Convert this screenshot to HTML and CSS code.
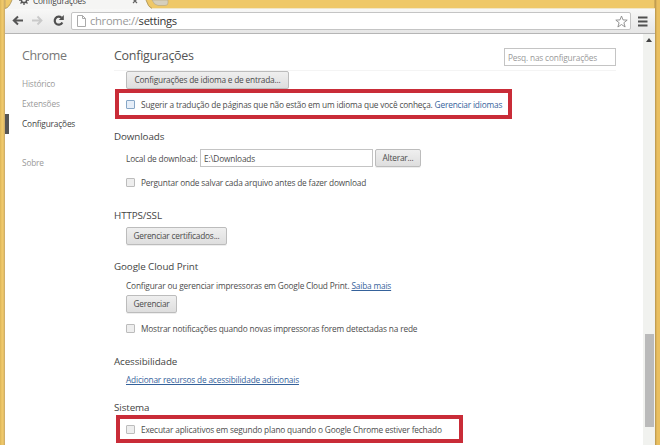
FILE: index.html
```
<!DOCTYPE html>
<html lang="pt-BR">
<head>
<meta charset="utf-8">
<title>Configurações</title>
<link rel="stylesheet" href="styles.css">
</head>
<body>
<div class="window">
  <div class="tabstrip">
    <svg class="tab-shape" width="175" height="9" viewBox="0 0 175 9"><path d="M0 9Q4 8 7 0H141Q143 7 147 9Z" fill="#f5f5f4"/><path d="M0 8.500Q4 8 7 0M141 0Q143 7 147 8.500" fill="none" stroke="#a58f58" stroke-width=".8"/><path d="M147 0H163V3Q163 5.500 160 5.500H153Q149 5 147 0Z" fill="#d6cfbc" stroke="#b5a57b" stroke-width=".6"/></svg>
    <div class="tab">
      <svg class="gear" width="10" height="10" viewBox="0 0 10 10"><circle cx="5" cy="5" r="2.600" fill="none" stroke="#555" stroke-width="1.500"/><path d="M5 0V2M5 8V10M0 5H2M8 5H10M1.500 1.500L3 3M7 7L8.500 8.500M1.500 8.500L3 7M7 3L8.500 1.500" stroke="#555" stroke-width="1.300"/></svg>
      <span class="tab-title">Configurações</span>
      <svg class="close" width="6" height="6" viewBox="0 0 6 6"><path d="M1 1L5 5M5 1L1 5" stroke="#666" stroke-width="1.200"/></svg>
    </div>
  </div>
  <div class="toolbar">
    <svg class="nav" width="60" height="16" viewBox="0 0 60 16"><path d="M11 7.500H2M6 3.500L1.800 7.500L6 11.500" fill="none" stroke="#555" stroke-width="2"/><path d="M20 7.500H29M25.500 3.500L29.500 7.500L25.500 11.500" fill="none" stroke="#c9c9c9" stroke-width="1.800"/><path d="M49.500 4.800A4 4 0 1 0 50.300 9.500" fill="none" stroke="#505050" stroke-width="2.200"/><path d="M51.800 2V7H46.800Z" fill="#505050"/></svg>
    <div class="omnibox">
      <svg class="page-icon" width="9" height="12" viewBox="0 0 9 12"><path d="M.5.500H5.500L8.500 3.500V11.500H.5ZM5.500.500V3.500H8.500" fill="#fff" stroke="#aaa"/></svg>
      <span class="url"><i>chrome://</i>settings</span>
      <svg class="star" width="13" height="13" viewBox="0 0 13 13"><path d="M6.500 1L8 4.900L12.200 5.100L8.900 7.700L10.100 12L6.500 9.500L2.900 12L4.100 7.700L.8 5.100L5 4.900Z" fill="#fff" stroke="#8a8a8a" stroke-width=".9"/></svg>
    </div>
    <svg class="menu" width="10" height="11" viewBox="0 0 10 11"><path d="M0 1.500H9.500M0 5.500H9.500M0 9.500H9.500" stroke="#505050" stroke-width="2"/></svg>
  </div>
  <div class="page">
    <nav class="side">
      <div class="brand">Chrome</div>
      <div class="item">Histórico</div>
      <div class="item">Extensões</div>
      <div class="item active">Configurações</div>
      <div class="item about">Sobre</div>
    </nav>
    <main class="content">
      <header class="head"><h1>Configurações</h1><div class="search">Pesq. nas configurações</div></header>
      <button class="btn b-lang">Configurações de idioma e de entrada...</button>
      <div class="mark mark-lang"><span class="box focus"></span><span>Sugerir a tradução de páginas que não estão em um idioma que você conheça. <a>Gerenciar idiomas</a></span></div>
      <h2 class="h-down">Downloads</h2>
      <div class="row location"><span class="label">Local de download:</span><div class="field">E:\Downloads</div><button class="btn b-change">Alterar...</button></div>
      <div class="row ask"><span class="box"></span><span>Perguntar onde salvar cada arquivo antes de fazer download</span></div>
      <h2 class="h-ssl">HTTPS/SSL</h2>
      <button class="btn b-cert">Gerenciar certificados...</button>
      <h2 class="h-print">Google Cloud Print</h2>
      <div class="row"><span>Configurar ou gerenciar impressoras em Google Cloud Print. <a class="u">Saiba mais</a></span></div>
      <button class="btn b-manage">Gerenciar</button>
      <div class="row notify"><span class="box"></span><span>Mostrar notificações quando novas impressoras forem detectadas na rede</span></div>
      <h2 class="h-acc">Acessibilidade</h2>
      <div class="row access"><a class="u">Adicionar recursos de acessibilidade adicionais</a></div>
      <h2 class="h-sys">Sistema</h2>
      <div class="mark mark-sys"><span class="box"></span><span>Executar aplicativos em segundo plano quando o Google Chrome estiver fechado</span></div>
    </main>
    <div class="scroll"><svg width="6" height="4" viewBox="0 0 6 4"><path d="M3 0L6 4H0Z" fill="#444"/></svg><div class="thumb"></div></div>
  </div>
</div>
</body>
</html>
```
FILE: styles.css
```
* { box-sizing: border-box; }
body { margin: 0; font-family: "Open Sans", "Noto Sans", sans-serif; font-size: 8.3px; letter-spacing: -0.17px; color: #4c4c4c; overflow: hidden; }
svg { display: block; flex: none; }
.window { width: 660px; height: 445px; padding: 0 5px; background: linear-gradient(90deg, #dbb457 0, #efc86a 2px, #efc86a 3px, #c7a767 5px, #efc868 6px, #efc868 654px, #b5924c 655px, #e9bf60 657px, #e9bf60 660px); overflow: hidden; }
.tabstrip { height: 8px; position: relative; }
.tab-shape { position: absolute; left: 0; top: 0; }
.tab { position: absolute; left: 14px; top: -5px; display: flex; align-items: center; height: 12px; }
.gear { margin-right: 4px; margin-top: -2px; }
.close { margin-top: -1px; }
.tab-title { font-size: 8.3px; letter-spacing: -0.2px; line-height: 10px; width: 99px; color: #444; }
.toolbar { height: 26px; display: flex; align-items: center; background: linear-gradient(#f8f8f7, #e6e6e6); border-top: 1px solid #f1e6c8; border-bottom: 1px solid #b5b5b5; padding-left: 7px; }
.omnibox { width: 560px; height: 18px; margin-left: -1px; border: 1px solid #c4c4c4; border-radius: 2px; background: #fff; display: flex; align-items: center; padding: 0 2px 0 5px; }
.url { font-size: 11.2px; letter-spacing: -0.3px; line-height: 16px; margin-left: 4px; flex: 1; color: #333; }
.url i { font-style: normal; color: #999; }
.menu { margin-left: 7px; }
.page { height: 411px; background: #fff; display: flex; overflow: hidden; }
.side { width: 109px; flex: none; color: #999; }
.brand { font-size: 12.5px; letter-spacing: -0.35px; line-height: 18px; margin: 13px 0 9px 17px; color: #777; }
.item { height: 20px; line-height: 20px; padding-left: 17px; }
.active { border-left: 4px solid #555; padding-left: 13px; color: #444; }
.about { margin-top: 19px; }
.content { flex: 1; min-width: 0; }
.head { height: 37px; width: 502px; border-bottom: 1px solid #f4f4f4; display: flex; justify-content: space-between; align-items: flex-start; }
h1 { margin: 13px 0 0; font-weight: 400; font-size: 12.5px; letter-spacing: -0.28px; line-height: 18px; color: #555; }
.search { width: 112px; height: 18px; margin-top: 14px; border: 1px solid #c4c4c4; padding-left: 3px; line-height: 17px; color: #999; white-space: nowrap; }
.btn { display: block; height: 18px; margin: 0 0 0 12px; padding: 0; font: inherit; letter-spacing: -0.2px; line-height: 16px; color: #4c4c4c; border: 1px solid #bcbcbc; border-radius: 2px; background: linear-gradient(#efefef, #dedede); box-shadow: 0 1px 0 #eee; white-space: nowrap; }
.b-lang { width: 163px; }
.mark { display: flex; align-items: center; border: 4px solid #c92c38; white-space: nowrap; }
.mark-lang { width: 397px; height: 30px; margin-left: 1px; padding-left: 7px; }
.mark-sys { width: 347px; height: 28px; margin-left: 2px; padding-left: 6px; }
.box { width: 9px; height: 9px; flex: none; border: 1px solid #bcbcbc; border-radius: 1px; background: #eee; margin-right: 6px; }
.focus { border-color: #86a6c6; background: #e6eef8; }
a { color: #35629b; }
.u { text-decoration: underline; }
h2 { margin: 0; font-weight: 400; font-size: 9.8px; letter-spacing: -0.09px; height: 18px; line-height: 20px; color: #444; }
.h-down { margin: 8px 0 4px; }
.row { display: flex; align-items: center; height: 16px; padding-left: 12px; white-space: nowrap; }
.location { height: 18px; }
.location .btn { margin-left: 2px; }
.label { width: 74px; }
.field { width: 173px; height: 18px; border: 1px solid #c4c4c4; padding-left: 3px; line-height: 17px; }
.b-change { width: 46px; }
.ask { margin-top: 7px; }
.h-ssl { margin: 16px 0 3px; }
.b-cert { width: 101px; }
.h-print { margin: 12px 0 2px; }
.b-manage { width: 51px; margin-top: 2px; }
.notify { margin-top: 7px; }
.h-acc { margin: 16px 0 1px; }
.h-sys { margin-top: 11px; height: 17px; }
.scroll { width: 12px; flex: none; background: #f1f2ef; display: flex; flex-direction: column; align-items: center; padding-top: 4px; }
.thumb { width: 9px; height: 93px; margin-top: 292px; background: #bababa; }
```
